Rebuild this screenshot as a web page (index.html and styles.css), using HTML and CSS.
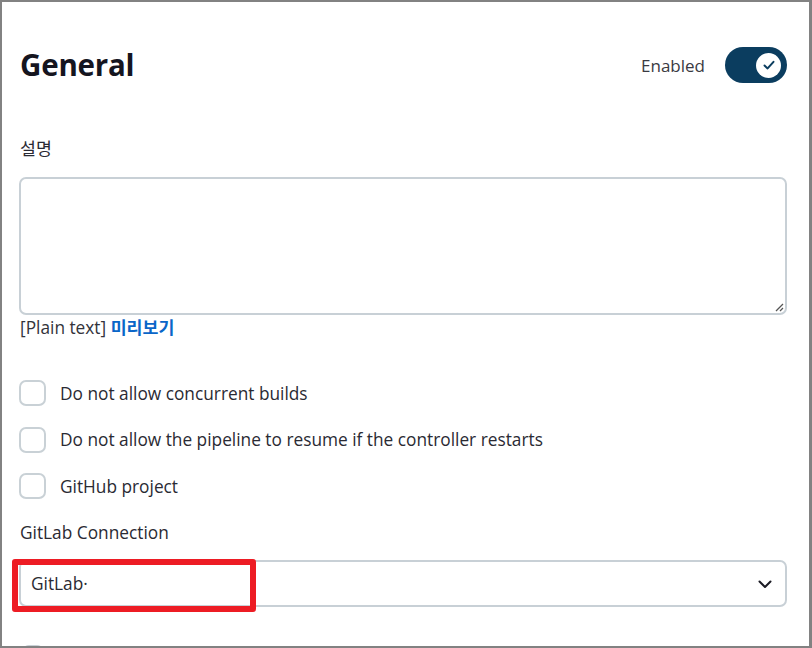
FILE: index.html
```html
<!DOCTYPE html>
<html lang="ko">
<head>
<meta charset="utf-8">
<link rel="stylesheet" href="styles.css">
</head>
<body>
<div class="frame">
  <div class="header">
    <h1 class="title">General</h1>
    <div class="enabled">
      <span class="enabled-label">Enabled</span>
      <span class="toggle">
        <span class="knob">
          <svg width="14" height="14" viewBox="0 0 14 14"><path d="M2.5 7.5 L5.6 10.4 L11.5 3.8" fill="none" stroke="#0b3d5f" stroke-width="2" stroke-linecap="round" stroke-linejoin="round"/></svg>
        </span>
      </span>
    </div>
  </div>

  <div class="field-label desc-label">설명</div>
  <div class="textarea">
    <svg class="grip" width="10" height="10" viewBox="0 0 10 10"><path d="M9 2 L2 9 M9 6 L6 9" stroke="#555" stroke-width="1.3" fill="none"/></svg>
  </div>
  <div class="preview-line">[Plain text] <a class="preview">미리보기</a></div>

  <div class="checks">
    <div class="check"><span class="box"></span><span>Do not allow concurrent builds</span></div>
    <div class="check"><span class="box"></span><span>Do not allow the pipeline to resume if the controller restarts</span></div>
    <div class="check"><span class="box"></span><span>GitHub project</span></div>
  </div>

  <div class="field-label conn-label">GitLab Connection</div>
  <div class="select-wrap">
    <div class="select">
      <span class="select-value">GitLab·</span>
      <svg class="chevron" width="16" height="16" viewBox="0 0 16 16"><path d="M2.5 5.5 L8 11 L13.5 5.5" fill="none" stroke="#1b1b24" stroke-width="2" stroke-linecap="round" stroke-linejoin="round"/></svg>
    </div>
    <div class="highlight"></div>
  </div>
  <div class="check next"><span class="box"></span></div>
</div>
</body>
</html>
```

FILE: styles.css
```css
html, body {
  margin: 0;
  padding: 0;
  background: #ffffff;
}
.frame {
  box-sizing: border-box;
  width: 812px;
  height: 648px;
  overflow: hidden;
  border-style: solid;
  border-color: #828282;
  border-width: 2px 3px 2px 2px;
  padding: 0 22px 0 17px;
  font-family: "Open Sans", "Noto Sans CJK KR", sans-serif;
  color: #2a2a33;
  font-size: 17.3px;
}
.header {
  display: flex;
  justify-content: space-between;
  align-items: center;
  height: 36px;
  margin-top: 45px;
}
.title {
  margin: 0 0 0 1px;
  font-size: 29.5px;
  line-height: 36px;
  font-weight: 700;
  color: #15151f;
  letter-spacing: -0.2px;
}
.enabled {
  display: flex;
  align-items: center;
  gap: 20px;
}
.enabled-label {
  color: #3a3a42;
  font-size: 17px;
}
.toggle {
  box-sizing: border-box;
  width: 62px;
  height: 36px;
  border-radius: 18px;
  background: #0b3d5f;
  display: flex;
  align-items: center;
  justify-content: flex-end;
  padding-right: 6px;
}
.knob {
  width: 25px;
  height: 25px;
  border-radius: 50%;
  background: #fff;
  display: flex;
  align-items: center;
  justify-content: center;
}
.field-label {
  margin-left: 1px;
  color: #2a2a33;
}
.desc-label {
  margin-top: 54px;
  height: 24px;
  line-height: 24px;
}
.textarea {
  position: relative;
  box-sizing: border-box;
  margin-top: 16px;
  height: 138px;
  border: 2px solid #c8d0d6;
  border-radius: 7px;
}
.grip {
  position: absolute;
  right: 1px;
  bottom: 1px;
}
.preview-line {
  margin-top: 1px;
  margin-left: 1px;
  height: 24px;
  line-height: 24px;
  color: #33333b;
}
.preview {
  color: #0a66c8;
  font-weight: 700;
}
.checks {
  margin-top: 40px;
  display: flex;
  flex-direction: column;
  gap: 20.5px;
}
.check {
  display: flex;
  align-items: center;
  gap: 14px;
  height: 26px;
  color: #2a2a33;
}
.box {
  box-sizing: border-box;
  width: 27px;
  height: 26px;
  border: 2px solid #c9d1d6;
  border-radius: 7px;
  flex: none;
}
.conn-label {
  margin-top: 22px;
  height: 24px;
  line-height: 24px;
}
.select-wrap {
  position: relative;
  margin-top: 15px;
}
.select {
  box-sizing: border-box;
  height: 47px;
  border: 2px solid #c8d0d6;
  border-radius: 7px;
  display: flex;
  align-items: center;
  justify-content: space-between;
  padding: 0 12px 0 10px;
}
.select-value {
  color: #2a2a33;
}
.highlight {
  position: absolute;
  left: -7px;
  top: -1px;
  width: 244px;
  height: 53px;
  box-sizing: border-box;
  border: 6px solid #ed1c24;
  border-radius: 3px;
}
.next {
  margin-top: 38px;
  margin-left: 3px;
}
.next .box {
  width: 22px;
}
```
